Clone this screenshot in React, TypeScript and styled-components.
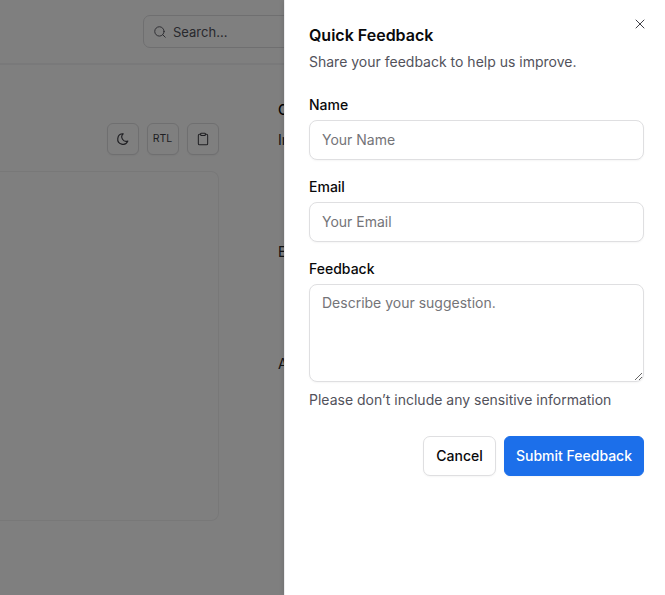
import React from "react";
import styled, { createGlobalStyle } from "styled-components";
import { Clipboard, Search, X } from "lucide-react";

const GlobalStyle = createGlobalStyle`
  *, *::before, *::after { box-sizing: border-box; }
  html, body { margin: 0; padding: 0; overflow: hidden; }
  body, input, textarea, button {
    font-family: Inter, sans-serif;
    font-size: 14px;
    line-height: 20px;
  }
`;

const Screen = styled.div`
  position: relative;
  width: 665px;
  height: 595px;
  overflow: hidden;
  background: #fff;
  color: #18181b;
`;

const Page = styled.div`
  display: flex;
  flex-direction: column;
  height: 100%;
`;

const Header = styled.header`
  display: flex;
  height: 65px;
  padding: 15px 0 0 143px;
  border-bottom: 2px solid #f3f3f4;
`;

const SearchBox = styled.div`
  display: flex;
  align-items: center;
  gap: 6px;
  width: 260px;
  height: 33px;
  padding: 0 9px;
  border: 1px solid #dedee0;
  border-radius: 7px;
  color: #52525b;
  font-size: 13px;

  svg { width: 14px; height: 14px; }
`;

const Content = styled.main`
  display: flex;
  flex: 1;
`;

const PreviewColumn = styled.section`
  display: flex;
  flex-direction: column;
  width: 219px;
  padding-top: 58px;
`;

const Toolbar = styled.div`
  display: flex;
  justify-content: flex-end;
  gap: 8px;
  margin-bottom: 16px;
`;

const ToolButton = styled.button`
  display: flex;
  align-items: center;
  justify-content: center;
  width: 32px;
  height: 32px;
  padding: 0 1px 0 0;
  border: 1px solid #dedee0;
  border-radius: 6px;
  background: #fff;
  color: #3f3f46;
  font-size: 10.5px;
  box-shadow: 0 1px 2px rgba(0, 0, 0, 0.05);

  svg { width: 14px; height: 14px; }
`;

const Preview = styled.div`
  height: 350px;
  border: 1px solid #f0f0f1;
  border-left: 0;
  border-radius: 0 8px 8px 0;
`;

const Outline = styled.aside`
  display: flex;
  flex-direction: column;
  padding: 35px 0 0 59px;
`;

const OutlineItem = styled.div<{ $space: number; $strong?: boolean }>`
  height: 20px;
  margin-bottom: ${({ $space }) => $space}px;
  font-weight: ${({ $strong }) => ($strong ? 500 : 400)};
  color: ${({ $strong }) => ($strong ? "#09090b" : "#27272a")};
`;

const Backdrop = styled.div`
  position: absolute;
  inset: 0;
  background: rgba(0, 0, 0, 0.5);
`;

const Drawer = styled.section`
  position: absolute;
  inset: 0 0 0 284px;
  display: flex;
  flex-direction: column;
  padding: 23px 21px 0 24px;
  border-left: 1px solid #ececee;
  background: #fff;
  box-shadow: 0 0 5px rgba(0, 0, 0, 0.16);
`;

const CloseButton = styled.button`
  position: absolute;
  top: 15.5px;
  right: 17px;
  display: flex;
  width: 16px;
  height: 16px;
  padding: 0;
  border: 0;
  background: none;
  color: #3f3f46;

  svg { width: 16px; height: 16px; }
`;

const Title = styled.h2`
  margin: 0 0 5px;
  font-size: 16px;
  font-weight: 600;
  line-height: 24px;
  color: #09090b;
`;

const Hint = styled.p`
  margin: 0;
  color: #52525b;
`;

const Form = styled.form`
  display: flex;
  flex-direction: column;
  gap: 17px;
  margin-top: 23px;
`;

const Field = styled.div`
  display: flex;
  flex-direction: column;
`;

const Label = styled.label`
  margin-bottom: 5px;
  font-weight: 500;
  color: #09090b;
`;

const Input = styled.input`
  height: 40px;
  padding: 0 12px 2px;
  border: 1px solid #dfdfe1;
  border-radius: 8px;
  outline: none;
  box-shadow: 0 1px 2px rgba(0, 0, 0, 0.04);

  &::placeholder { color: #747478; opacity: 1; }
`;

const TextArea = styled(Input).attrs({ as: "textarea" })`
  height: 98px;
  margin-bottom: 8px;
  padding: 8px 12px;
  resize: vertical;
`;

const Actions = styled.div`
  display: flex;
  justify-content: flex-end;
  gap: 8px;
  margin-top: 9px;
`;

const Button = styled.button<{ $primary?: boolean }>`
  width: ${({ $primary }) => ($primary ? 140 : 73)}px;
  height: 40px;
  padding: 0 0 1px;
  border: 1px solid ${({ $primary }) => ($primary ? "#1c6fea" : "#dfdfe1")};
  border-radius: ${({ $primary }) => ($primary ? 6 : 7)}px;
  background: ${({ $primary }) => ($primary ? "#1c6fea" : "#fff")};
  color: ${({ $primary }) => ($primary ? "#fff" : "#09090b")};
  font-weight: 500;
  white-space: nowrap;
  box-shadow: 0 1px 2px rgba(0, 0, 0, 0.04);
`;

function MoonIcon() {
  return (
    <svg
      viewBox="0 0 24 24"
      fill="none"
      stroke="currentColor"
      strokeWidth={2}
      strokeLinecap="round"
      strokeLinejoin="round"
    >
      <path d="M12 3c.13 0 .26 0 .39 0a7.5 7.5 0 0 0 7.92 12.45A9 9 0 1 1 12 3Z" />
    </svg>
  );
}

export default function App() {
  return (
    <Screen>
      <GlobalStyle />
      <Page>
        <Header>
          <SearchBox>
            <Search strokeWidth={1.6} />
            <span>Search...</span>
          </SearchBox>
        </Header>
        <Content>
          <PreviewColumn>
            <Toolbar>
              <ToolButton aria-label="Dark mode"><MoonIcon /></ToolButton>
              <ToolButton>RTL</ToolButton>
              <ToolButton aria-label="Copy"><Clipboard strokeWidth={1.75} /></ToolButton>
            </Toolbar>
            <Preview />
          </PreviewColumn>
          <Outline>
            <OutlineItem $space={10} $strong>C</OutlineItem>
            <OutlineItem $space={92}>In</OutlineItem>
            <OutlineItem $space={92}>E</OutlineItem>
            <OutlineItem $space={0}>A</OutlineItem>
          </Outline>
        </Content>
      </Page>
      <Backdrop />
      <Drawer role="dialog" aria-labelledby="feedback-title">
        <CloseButton aria-label="Close"><X strokeWidth={1.5} /></CloseButton>
        <Title id="feedback-title">Quick Feedback</Title>
        <Hint>Share your feedback to help us improve.</Hint>
        <Form>
          <Field>
            <Label htmlFor="name">Name</Label>
            <Input id="name" placeholder="Your Name" />
          </Field>
          <Field>
            <Label htmlFor="email">Email</Label>
            <Input id="email" placeholder="Your Email" />
          </Field>
          <Field>
            <Label htmlFor="feedback">Feedback</Label>
            <TextArea id="feedback" placeholder="Describe your suggestion." />
            <Hint>Please don’t include any sensitive information</Hint>
          </Field>
          <Actions>
            <Button type="button">Cancel</Button>
            <Button type="submit" $primary>Submit Feedback</Button>
          </Actions>
        </Form>
      </Drawer>
    </Screen>
  );
}
